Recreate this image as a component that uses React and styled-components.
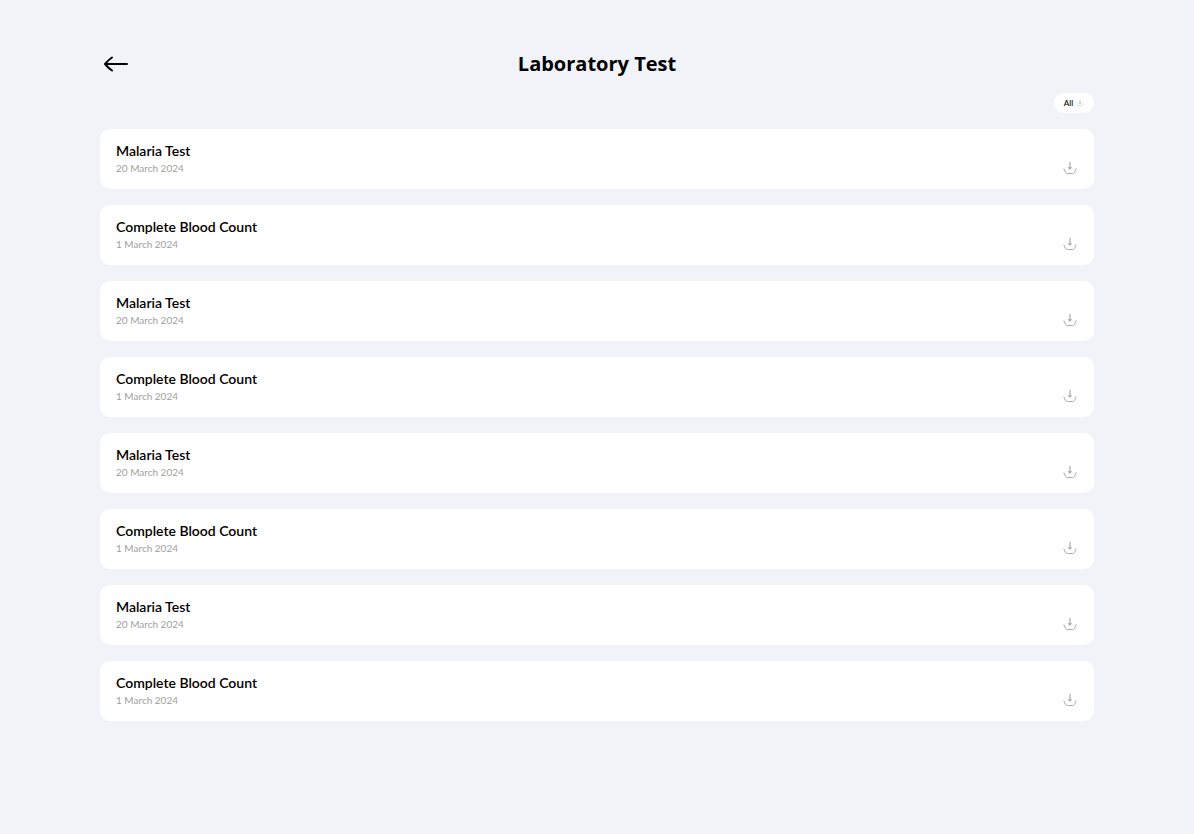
import React from "react";
import styled, { createGlobalStyle } from "styled-components";

const GlobalStyle = createGlobalStyle`
  * { box-sizing: border-box; }
  body {
    margin: 0;
    background: #f1f3f8;
    color: #000;
    font-family: Lato, sans-serif;
  }
`;

const Page = styled.main`
  min-height: 100vh;
  padding: 48px 100px;
`;

const Header = styled.header`
  display: grid;
  grid-template-columns: 32px 1fr 32px;
  align-items: center;
`;

const Title = styled.h1`
  margin: 0;
  font: 700 20px/32px "Open Sans", sans-serif;
  text-align: center;
`;

const IconButton = styled.button`
  display: flex;
  padding: 0;
  border: 0;
  background: none;
  color: ${(p) => p.$color};
  cursor: pointer;
`;

const Toolbar = styled.div`
  display: flex;
  justify-content: flex-end;
  margin: 13px 0 16px;
`;

const DownloadAll = styled.button`
  display: flex;
  align-items: center;
  justify-content: center;
  gap: 3px;
  width: 40px;
  height: 20px;
  padding: 0;
  border: 0;
  border-radius: 10px;
  background: #fff;
  color: #111;
  font: 600 8px/12px Lato, sans-serif;
  cursor: pointer;

  svg { color: #b4b4b4; }
`;

const TestList = styled.ul`
  display: flex;
  flex-direction: column;
  gap: 16px;
  margin: 0;
  padding: 0;
  list-style: none;
`;

const TestCard = styled.li`
  display: flex;
  align-items: flex-end;
  justify-content: space-between;
  min-height: 60px;
  padding: 12px 16px 13px;
  border-radius: 10px;
  background: #fff;
`;

const TestName = styled.h2`
  margin: 0;
  font-size: 14px;
  line-height: 20px;
  font-weight: 600;
`;

const TestDate = styled.time`
  display: block;
  color: #a0a0a0;
  font-size: 10px;
  line-height: 15px;
`;

function BackArrow() {
  return (
    <svg width="32" height="32" viewBox="0 0 32 32" fill="none" stroke="currentColor" strokeWidth="2" strokeLinecap="round" strokeLinejoin="round" aria-hidden="true">
      <path d="M27 16H5M12 9.5C9.5 11 7.5 13 5 16C7.5 19 9.5 21 12 22.5" />
    </svg>
  );
}

function DownloadIcon({ size }) {
  return (
    <svg width={size} height={size} viewBox="0 0 16 16" fill="none" stroke="currentColor" strokeLinecap="round" strokeLinejoin="round" aria-hidden="true">
      <path d="M8 2.5V8.5" strokeWidth="1.2" />
      <path d="M6.3 7.4H9.7L8 9.4Z" fill="currentColor" strokeWidth="0.6" />
      <path d="M2 8.8C2.2 9.8 2.6 11 3.5 12.5C4 13.2 4.5 13.5 5.4 13.5H10.6C11.5 13.5 12 13.2 12.5 12.5C13.4 11 13.8 9.8 14 8.8" />
    </svg>
  );
}

const malaria = { name: "Malaria Test", date: "20 March 2024", iso: "2024-03-20" };
const bloodCount = { name: "Complete Blood Count", date: "1 March 2024", iso: "2024-03-01" };
const tests = [malaria, bloodCount, malaria, bloodCount, malaria, bloodCount, malaria, bloodCount];

export default function App() {
  return (
    <Page>
      <GlobalStyle />
      <Header>
        <IconButton type="button" $color="#000" aria-label="Back"><BackArrow /></IconButton>
        <Title>Laboratory Test</Title>
      </Header>
      <Toolbar>
        <DownloadAll type="button">All <DownloadIcon size={8} /></DownloadAll>
      </Toolbar>
      <TestList>
        {tests.map((test, index) => (
          <TestCard key={index}>
            <div>
              <TestName>{test.name}</TestName>
              <TestDate dateTime={test.iso}>{test.date}</TestDate>
            </div>
            <IconButton type="button" $color="#aaa" aria-label={`Download ${test.name}, ${test.date}`}>
              <DownloadIcon size={16} />
            </IconButton>
          </TestCard>
        ))}
      </TestList>
    </Page>
  );
}
